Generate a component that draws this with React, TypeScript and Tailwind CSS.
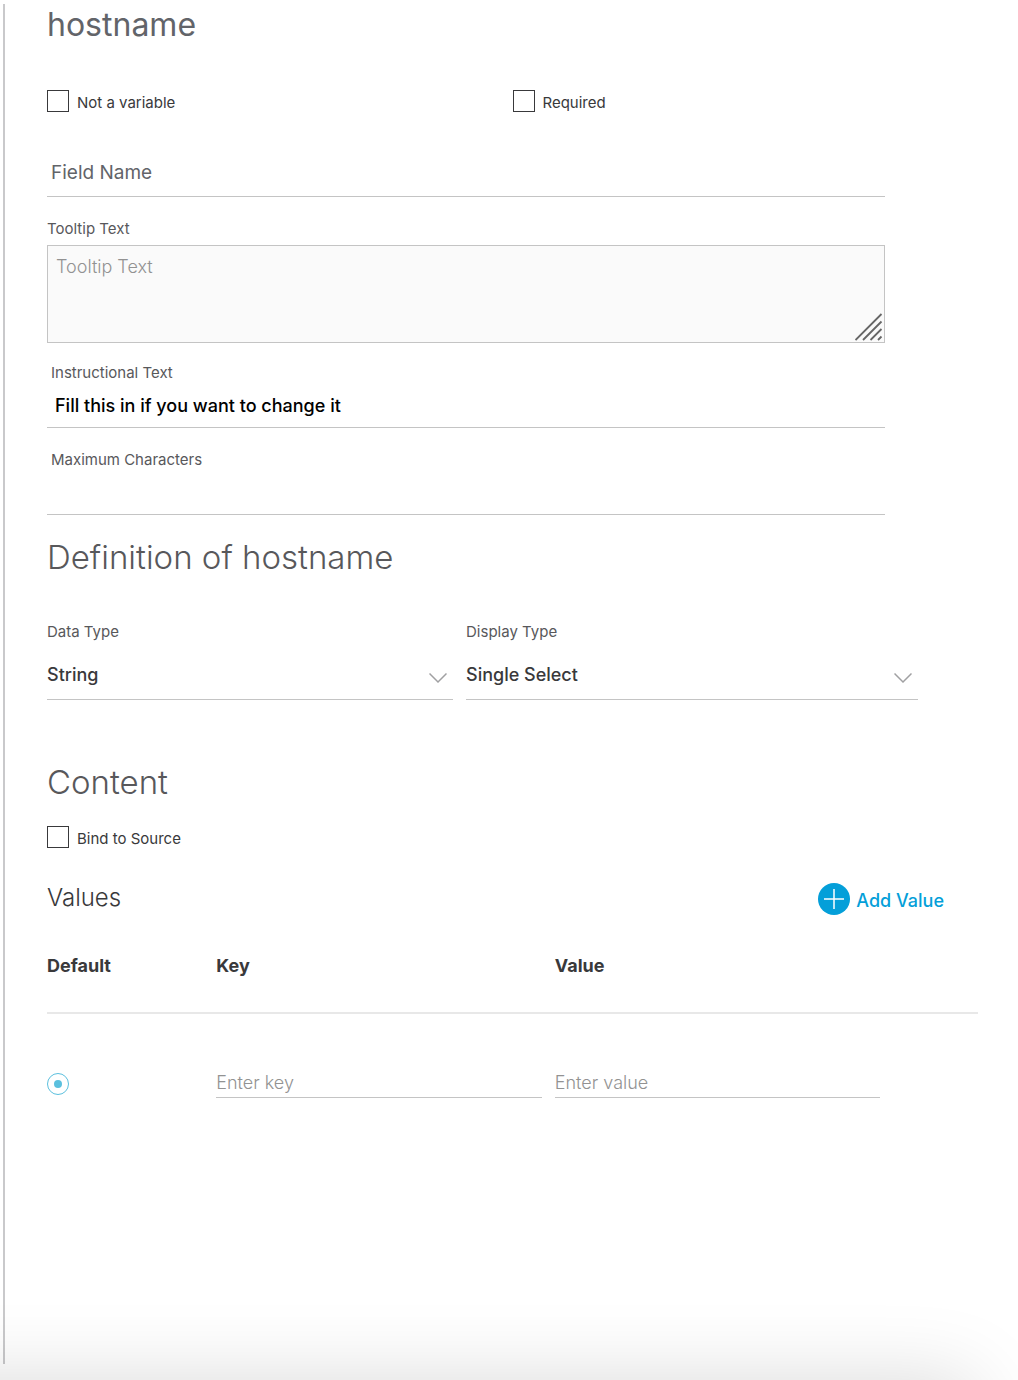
import React, { useState } from "react";

type CheckProps = { id: string; label: string };

function Check({ id, label }: CheckProps) {
  return (
    <div className="flex items-start gap-2">
      <input
        id={id}
        type="checkbox"
        className="size-[22px] shrink-0 appearance-none border border-[#39393b] bg-white checked:bg-[#049fd9]"
      />
      <label htmlFor={id} className="text-[15px] leading-[25px] text-[#39393b]">
        {label}
      </label>
    </div>
  );
}

type FieldProps = { id: string; label: string; value?: string };

function Field({ id, label, value = "" }: FieldProps) {
  return (
    <div className="flex flex-col">
      <label htmlFor={id} className="px-1 text-[15px] leading-6 text-[#58585b]">
        {label}
      </label>
      <input
        id={id}
        type="text"
        defaultValue={value}
        className="h-[43px] w-full border-b border-[#c4c4c4] px-2 pb-0.5 text-lg font-medium text-black outline-none"
      />
    </div>
  );
}

type DropdownProps = { id: string; label: string; options: string[] };

function Dropdown({ id, label, options }: DropdownProps) {
  return (
    <div className="flex flex-col">
      <label htmlFor={id} className="text-[15px] leading-6 text-[#58585b]">
        {label}
      </label>
      <div className="relative">
        <select
          id={id}
          className="h-14 w-full appearance-none border-b border-[#c4c4c4] bg-transparent pt-1.5 text-lg font-medium text-[#39393b] outline-none"
        >
          {options.map((o) => (
            <option key={o}>{o}</option>
          ))}
        </select>
        <svg
          className="pointer-events-none absolute right-1.5 bottom-4 h-3 w-[18px]"
          viewBox="0 0 18 12"
          fill="none"
          stroke="#a0a0a2"
          strokeWidth="1.5"
        >
          <path d="M.5 1.5 9 10l8.500-8.500" />
        </svg>
      </div>
    </div>
  );
}

export default function App() {
  const [tooltip, setTooltip] = useState("");

  return (
    <div className="relative flex min-h-screen overflow-hidden bg-white font-[Inter,'Liberation_Sans',sans-serif]">
      <div className="mt-1 mb-4 ml-[3px] w-0.5 shrink-0 bg-[#c9c9cb]" />
      <main className="min-w-0 flex-1 pt-1 pr-10 pl-[42px]">
        <h1 className="text-[32px] leading-[42px] text-[#626469]">hostname</h1>

        <div className="mt-11 grid grid-cols-2">
          <Check id="not-variable" label="Not a variable" />
          <Check id="required" label="Required" />
        </div>

        <div className="mt-[42px] w-[90%]">
          <input
            type="text"
            aria-label="Field Name"
            placeholder="Field Name"
            className="h-10 w-full border-b border-[#c4c4c4] px-1 pb-2 text-[19px] outline-none placeholder:text-[#626469]"
          />
          <label htmlFor="tooltip" className="mt-5 block text-[15px] leading-6 text-[#58585b]">
            Tooltip Text
          </label>
          <div className="relative mt-1">
            <textarea
              id="tooltip"
              placeholder="Tooltip Text"
              value={tooltip}
              onChange={(e) => setTooltip(e.target.value)}
              className="block h-[98px] w-full resize-none border border-[#c4c4c4] bg-[#fafafa] px-2 py-[7px] text-lg font-light outline-none placeholder:text-[#929292]"
            />
            <svg
              className="pointer-events-none absolute right-0.5 bottom-0.5 size-7"
              viewBox="0 0 28 28"
              fill="none"
              stroke="#666666"
              strokeWidth="1.8"
            >
              <path d="M.5 27 26.500 1M8 27 26.500 8.500M15.500 27l11-11M23 27l3.500-3.500" />
            </svg>
          </div>
          <div className="mt-[18px] flex flex-col gap-5">
            <Field id="instructional" label="Instructional Text" value="Fill this in if you want to change it" />
            <Field id="max-characters" label="Maximum Characters" />
          </div>
        </div>

        <h2 className="mt-[22px] text-[33px] leading-10 font-light text-[#58585b]">Definition of hostname</h2>
        <div className="mt-[43px] mr-[60px] grid grid-cols-[406fr_452fr] gap-[13px]">
          <Dropdown id="data-type" label="Data Type" options={["String", "Integer", "Boolean"]} />
          <Dropdown id="display-type" label="Display Type" options={["Single Select", "Multi Select", "Text Field"]} />
        </div>

        <h2 className="mt-[62px] text-[33px] leading-10 font-light text-[#58585b]">Content</h2>
        <div className="mt-6">
          <Check id="bind" label="Bind to Source" />
        </div>

        <div className="mt-8 flex items-start justify-between pr-[34px]">
          <h3 className="text-2xl leading-[30px] font-light text-[#39393b]">Values</h3>
          <button type="button" className="flex items-center gap-1.5 text-lg leading-7 font-medium text-[#049fd9]">
            <svg className="size-8" viewBox="0 0 32 32">
              <circle cx="16" cy="16" r="16" fill="#049fd9" />
              <path d="M16 6v20M6 16h20" stroke="#fff" strokeWidth="1.500" />
            </svg>
            <span className="pt-1">Add Value</span>
          </button>
        </div>

        <table className="mt-[37px] w-full table-fixed border-collapse text-left text-lg leading-7">
          <colgroup>
            <col className="w-2/11" />
            <col className="w-4/11" />
            <col className="w-4/11" />
            <col className="w-1/11" />
          </colgroup>
          <thead>
            <tr className="h-[61px] border-b-2 border-[#e8e8e8] align-top text-[#39393b]">
              <th className="font-bold">Default</th>
              <th className="font-bold">Key</th>
              <th className="font-bold">Value</th>
              <td />
            </tr>
          </thead>
          <tbody>
            <tr>
              <td className="pt-14">
                <input
                  type="radio"
                  name="default"
                  aria-label="Default value"
                  defaultChecked
                  className="grid size-[22px] appearance-none place-items-center rounded-full border border-[#5bc0de] before:size-2 before:rounded-full checked:before:bg-[#5bc0de]"
                />
              </td>
              <td className="pt-[54px] pr-[13px]">
                <input
                  type="text"
                  aria-label="Key"
                  placeholder="Enter key"
                  className="block h-[30px] w-full border-b border-[#c4c4c4] font-light outline-none placeholder:text-[#929292]"
                />
              </td>
              <td className="pt-[54px] pr-[13px]">
                <input
                  type="text"
                  aria-label="Value"
                  placeholder="Enter value"
                  className="block h-[30px] w-full border-b border-[#c4c4c4] font-light outline-none placeholder:text-[#929292]"
                />
              </td>
              <td />
            </tr>
          </tbody>
        </table>
      </main>
      <div className="pointer-events-none absolute right-11 -bottom-32 -left-32 h-32 shadow-[0_0_80px_rgba(0,0,0,0.15)]" />
    </div>
  );
}
